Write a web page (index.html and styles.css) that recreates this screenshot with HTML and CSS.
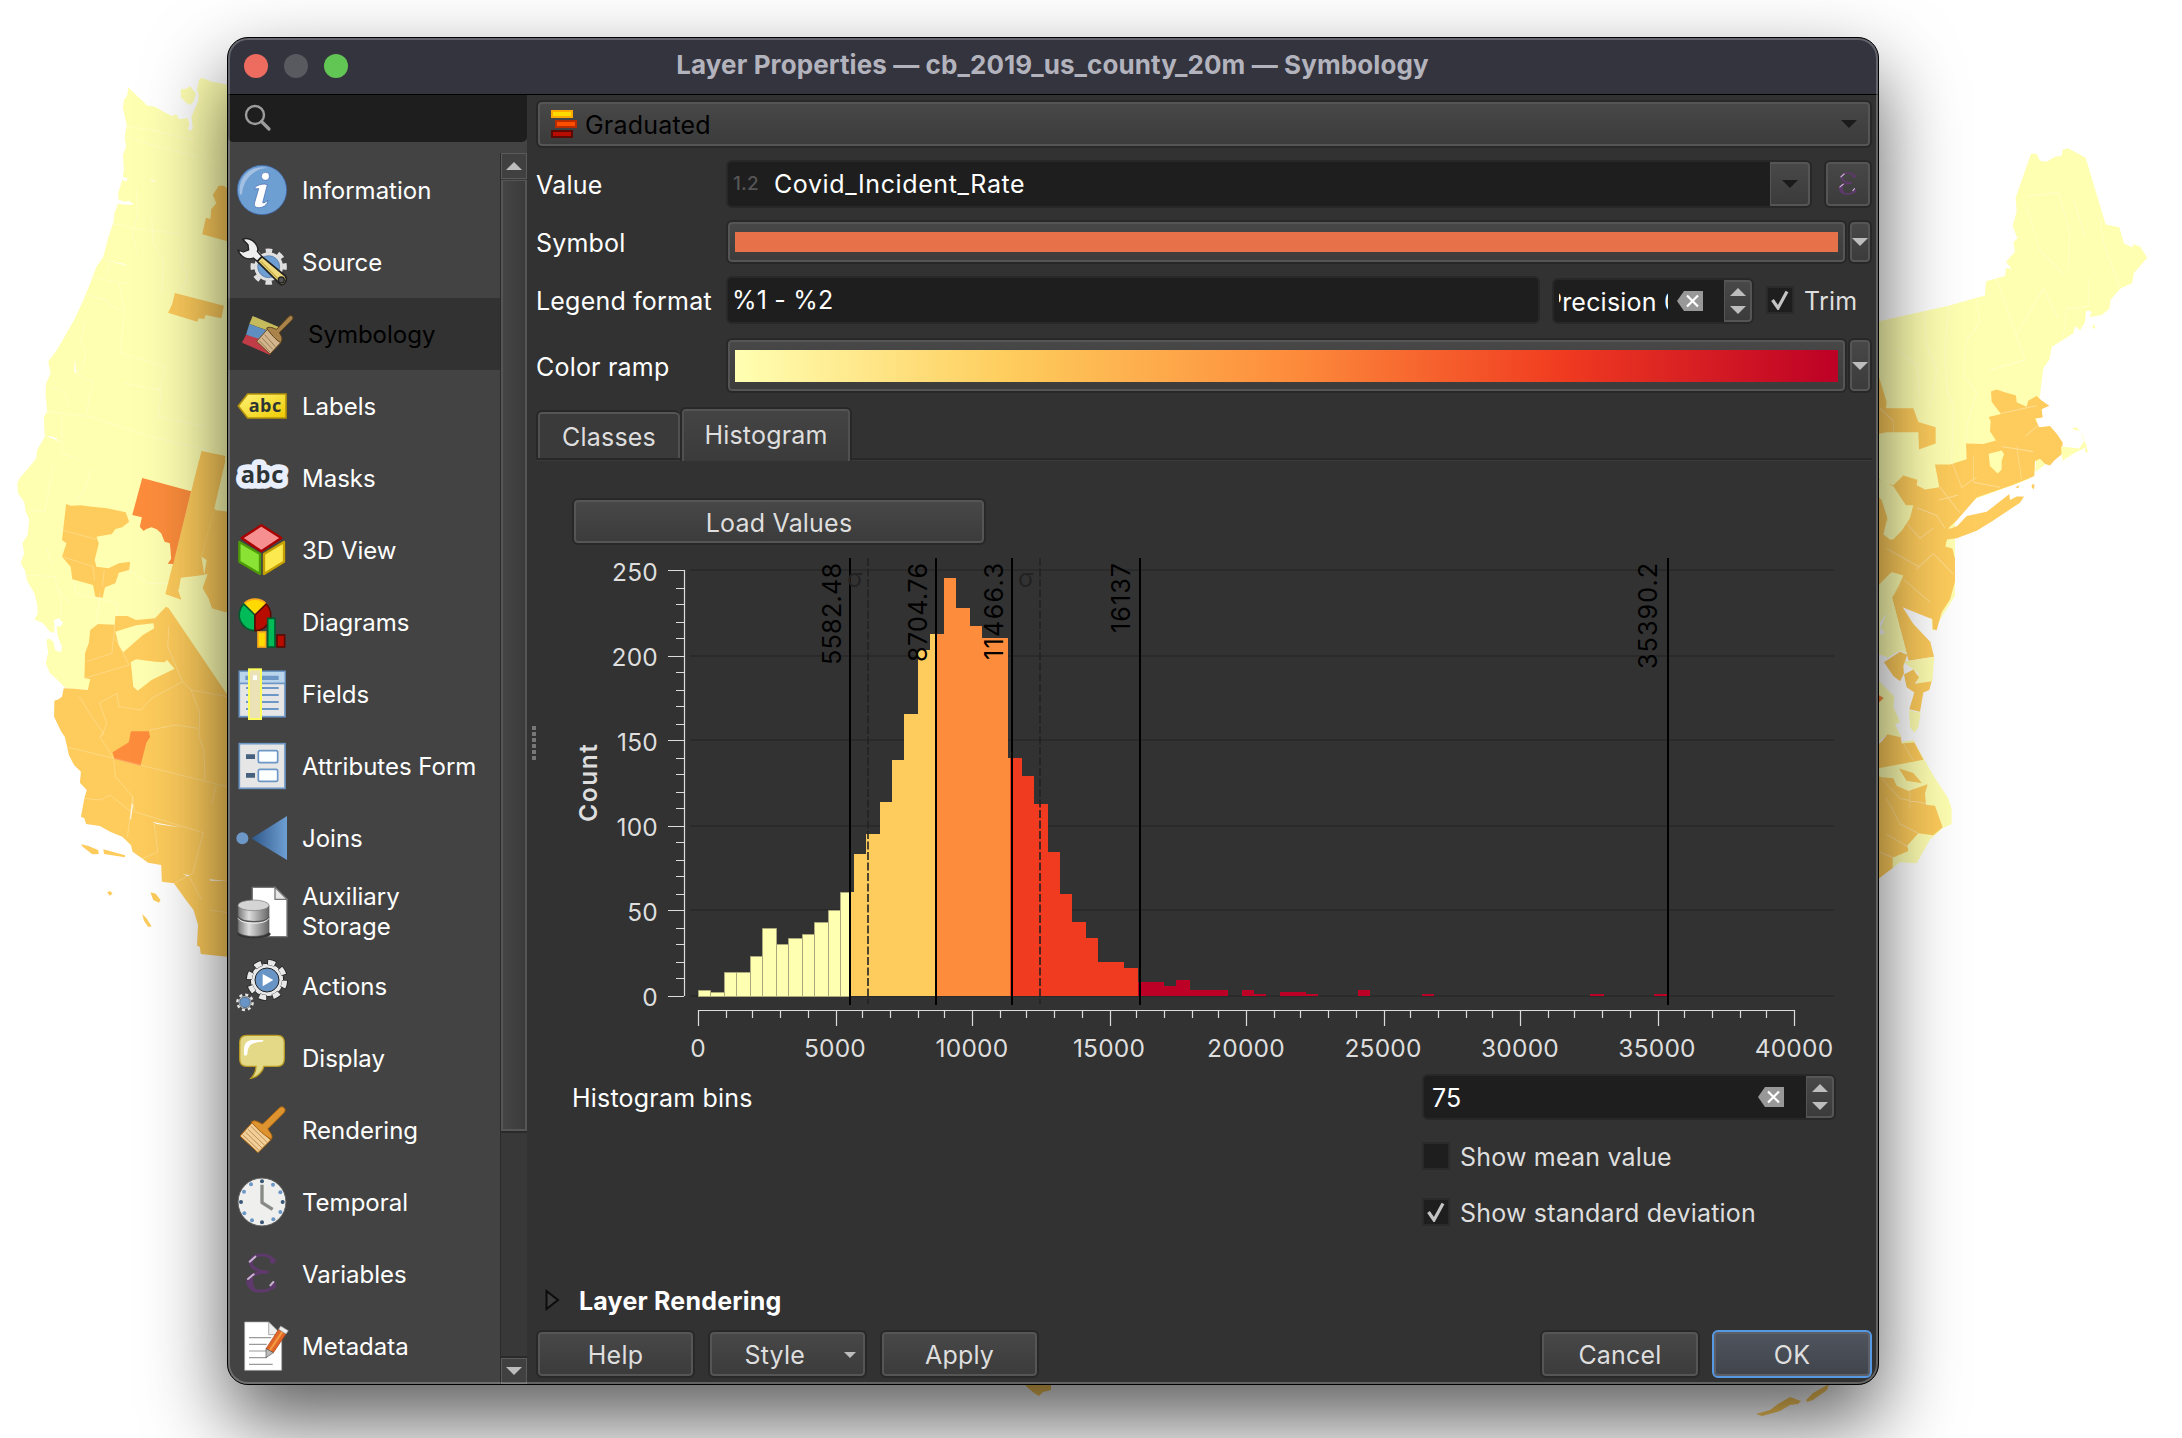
FILE: index.html
```html
<!DOCTYPE html>
<html lang="en">
<head>
<meta charset="utf-8">
<title>Layer Properties — cb_2019_us_county_20m — Symbology</title>
<link rel="stylesheet" href="styles.css">
</head>
<body>
<div class="desktop">
<svg class="map" width="2182" height="1438" viewBox="0 0 2182 1438">
  <!-- Pacific north-west -->
  <g transform="scale(.34439 .33333)">
    <path class="c1" d="M372 262L395 285 420 308 425 316 450 320 475 335 500 348 512 343 520 358 545 355 550 372 546 388 553 393 560 385 556 350 562 335 575 305 577 285 572 270 578 240 585 233 615 245 700 262V1442H55L105 1375 108 1350 130 1310 127 1250 137 1235 132 1180 134 1150 147 1120 140 1085 165 1050 185 1015 215 960 240 905 262 850 280 800 300 770 315 710 330 665 332 640 345 605 343 580 355 540 360 510 357 465 366 440 362 410 368 375 357 325 360 300 370 285Z"/>
    <path class="c1" d="M525 268L540 266 552 259 562 272 569 280 562 305 552 315 540 308 525 292Z"/>
    <path class="c2" d="M587 703L598 653 611 657 613 628 628 610 618 585 635 557 650 557 700 600V735Z"/>
    <path class="c2" d="M488 938L500 912 508 879 650 917 643 955 597 945 593 957 577 955 573 965Z"/>
    <path class="c2" d="M585 1353L655 1368 640 1445 565 1442Z"/>
    <path class="sea" d="M356 530L370 535 368 544 355 541ZM438 540L455 542 440 545ZM340 598L365 606 372 602 390 613 372 614 345 612ZM296 778L372 795 350 789 375 799ZM133 1307L155 1310 175 1325ZM217 1075L222 1120 216 1115Z"/>
    <path class="ln" d="M365 378L450 392 560 420M362 408L455 440 580 470M395 560L400 640 385 700 398 760M330 672L420 690 520 700M320 790L308 830M270 830L350 850 375 850M255 885L310 900 325 920 350 930M248 965L235 1020 250 1060 240 1100 220 1120 270 1145 250 1245M350 1060L480 1100 460 1180M345 850L360 930 350 1060M440 650L445 730 475 780 470 880M525 750L530 800 545 830 525 870M150 1160L190 1180 200 1220M135 1235L260 1250 440 1310 600 1350M180 1245V1360L290 1400M360 1150L470 1170 460 1250 600 1280"/>
  </g>
  <!-- California and Nevada -->
  <g transform="translate(0 460) scale(.34439 .33333)">
    <path class="c1" d="M105 0L60 50 50 70 52 100 70 125 75 155 85 180 80 225 65 250 70 280 60 310 72 330 80 365 100 400 108 435 110 460 100 478 125 490 145 515 160 520 155 535 135 538 137 560 140 575 133 610 145 640 165 658 190 685 260 690 700 800V0Z"/>
    <path class="sea" d="M157 480L170 475 183 488 178 497 164 500 168 530 180 560 176 577 160 570 155 545 142 535 142 518 158 518Z"/>
    <path class="c2" d="M578 0H660V135L622 150 585 290 593 345 525 353 520 385 528 405 527 420 480 403 502 312 555 95Z"/>
    <path class="c2" d="M622 150L700 160V465L617 450 605 415 588 385 593 345 600 300 585 290Z"/>
    <path class="c1" d="M655 0H700V160L622 146Z"/>
    <path class="c1" d="M527 355L560 352 603 342 588 385 605 415 615 445 700 470V770L485 440 480 403 527 420 517 390 525 380Z"/>
    <path class="c3" d="M413 54L555 94 503 312 487 311 497 296 495 268 493 250 478 245 468 220 455 208 440 202 425 207 417 213 406 200 412 172 384 165Z"/>
    <path class="c2" d="M192 132L205 137 235 136 255 139 310 145 365 157 375 185 355 202 335 207 325 222 280 230 287 250 275 300 280 320 315 325 345 310 378 305 375 330 345 338 335 370 305 382 298 413 277 410 270 375 210 358 205 320 180 290 193 250 180 240Z"/>
    <path class="c2" d="M185 685L215 686 255 690 262 658 245 655 247 580 258 548 262 510 285 492 333 494 335 468 370 468 395 480 450 475 482 440 490 445 700 765V1495L583 1482 580 1460 572 1457 575 1395 562 1350 540 1320 505 1270 470 1265 468 1215 430 1208 412 1195 385 1175 380 1155 355 1130 320 1115 290 1098 250 1092 245 1075 235 1070 245 1015 252 990 232 968 235 935 215 915 200 885 195 860 188 830 178 815 157 770 158 722 170 718 180 710Z"/>
    <path class="c1" d="M335 515L395 496 445 490 448 505 415 525 358 577 345 555ZM380 606L395 598 450 605 478 607 485 600 507 626 440 660 400 692 387 680Z"/>
    <path class="c3" d="M327 877L374 847 380 814 432 814 436 830 425 848 408 917 332 897Z"/>
    <path class="c2" d="M235 1153L255 1157 285 1170 287 1182 268 1183 240 1160ZM300 1168L363 1186V1192L302 1182ZM311 1297L320 1293 327 1301 319 1307ZM437 1297L452 1301 466 1320 462 1328 445 1320ZM413 1362L425 1375 440 1399 431 1401 418 1382Z"/>
    <path class="sea" d="M383 1030L386 1035 380 1080 378 1075ZM441 1085L530 1103 455 1092ZM530 1243L550 1245 545 1249ZM607 1258L660 1262 612 1262ZM565 1325L588 1328Z"/>
    <path class="ln" d="M155 15L130 155 85 150M265 30L240 100 220 120M75 345L160 350 165 380 200 430M135 265L150 310M215 360L220 400 340 430V465M180 210L280 238M182 290L270 320 275 360M303 330L297 380M170 390L180 440 175 490M290 400L280 490M333 495L325 580 250 605M335 535L358 580 375 615 245 655M287 730L340 700 345 740 410 750 440 715 530 665 487 560 490 500M230 710L260 760 300 820 290 830 330 895M290 730L310 790 295 830M530 665L555 690 660 710M555 690L580 760 578 830 592 870 595 960M435 810L510 795 575 805M198 862L330 895 660 980M330 900L335 950 385 1010 390 1055 590 1118M385 1010L370 1130M448 1090L458 1175 415 1195M590 1118L560 1240 505 1270M245 1015L290 1020 320 1005 380 1055M628 975L615 1030M550 1250L585 1320M610 1350L660 1358M375 330L430 370 490 370"/>
  </g>
  <!-- North-east coast -->
  <g transform="translate(1700 120) scale(.33333 .51020)">
    <path class="c1" d="M500 400L600 385 745 364 855 344 858 316 880 312 915 306 918 290 935 292 918 278 945 258 940 240 952 232 938 208 950 180 947 152 993 66 1010 66 1020 80 1040 82 1065 72 1085 70 1088 58 1105 56 1135 66 1157 74 1217 205 1258 210 1272 242 1298 250 1300 243 1320 248 1342 270 1302 300 1296 320 1262 330 1232 352 1228 370 1205 382 1170 386 1158 374 1155 396 1140 412 1125 404 1120 418 1055 445 1048 470 1030 486 1020 540 990 700 700 1000 500 1000Z"/>
    <path class="c1" d="M1178 402L1186 403 1184 409 1177 408Z"/>
    <path class="sea" d="M1162 373L1175 376 1168 387 1160 382ZM1018 542L1100 530V900L765 1000V780L830 742 1003 700 1030 650Z"/>
    <path class="c2" d="M873 532L890 528 912 533 948 540 950 553 980 562 985 550 1010 541 1025 550 1048 560 1025 567 1028 583 1005 585 1018 602 1050 600 1070 615 1088 632 1085 655 1062 668 1050 677 1005 668 1003 698 940 715 830 740 770 785 745 800 735 840 500 960V705L580 716 610 697 652 705 650 716 675 724 718 720 705 675 750 675 800 665 798 634 850 635 888 628 870 610 872 590 866 582 903 576 875 552Z"/>
    <path class="c2" d="M530 490L560 552 558 565 640 565 655 592 707 602V634L657 646 655 612 560 612 500 620ZM500 680L543 707 500 735Z"/>
    <path class="c1" d="M866 654L905 648 912 655 905 668 905 685 893 693 870 678ZM1008 668L1020 664 1037 675 1005 690ZM1083 640L1138 644 1153 628 1140 610 1115 605 1130 602 1150 620 1165 652 1155 650 1157 642 1125 652 1087 668ZM618 755L640 755 630 780 605 805 575 825 550 812 562 780 545 745 530 735 520 700 580 718Z"/>
    <path class="c1" d="M618 842L640 820 668 828 668 850 655 860 630 850Z"/>
    <path class="c2" d="M540 745L563 785 540 782ZM742 803L772 796 800 776 860 768 928 733 930 745 950 738 972 738 960 750 880 785 830 805 770 820 740 822ZM946 720L958 716 955 722ZM996 714L1004 715 1001 724 995 720Z"/>
    <path class="c2" d="M500 830L600 820 750 800 735 836 757 840 765 860V905L750 940 725 965 710 1000 698 998 697 978 680 976 615 960 690 1020 702 1052 626 1060 576 936 610 905 500 1000Z"/>
    <path class="c1" d="M500 940L545 905 575 886 610 893 597 912 576 936 620 1045 600 1040 560 1055 500 1180Z"/>
    <path class="sea" d="M608 955L695 978 697 1000 705 1020 690 1022 640 988ZM540 985L560 968 542 995 555 1005 540 1010Z"/>
    <path class="sea" d="M500 1040L560 1052 600 1090 640 1150 630 1225 560 1205 540 1130Z"/>
    <path class="c1" d="M538 1100L560 1115 583 1130 580 1150 600 1180 585 1185 605 1210 560 1205 500 1240V1075ZM610 1062L703 1052 697 1100 650 1105 655 1085Z"/>
    <path class="c2" d="M552 1063L600 1042 622 1048 610 1070 612 1085 600 1100 580 1090ZM612 1087L640 1077 657 1092 645 1105 695 1100 688 1117 670 1122 660 1160 628 1155 643 1122 620 1112Z"/>
    <path class="c3" d="M536 1127L551 1133 536 1142Z"/>
    <path class="c1" d="M627 1157L662 1162 655 1190 643 1201 630 1190Z"/>
    <path class="c1" d="M500 1230L640 1215 700 1285 745 1330 755 1350V1380L728 1388 690 1410 650 1457 600 1455 570 1470 500 1500Z"/>
    <path class="c2" d="M500 1240L545 1218 562 1204 603 1210 605 1222 643 1220 670 1254 500 1275ZM500 1280L545 1288 580 1290 590 1305 625 1315 683 1302 675 1320 678 1342 705 1344 728 1386 700 1402 655 1398 622 1422 625 1433 578 1446V1466L500 1505ZM597 1271L640 1280 666 1300 620 1295Z"/>
    <path class="ln" d="M975 157L1018 254 1090 302M985 150L1075 142 1110 220 1105 300M1120 155L1155 228M1200 190L1210 240 1260 330M890 312L975 470 870 490M950 420L1030 330 1075 390M1165 310V365L1100 370 1090 425M670 375L680 440 710 490 690 560M745 364L735 450 740 530 760 560 755 670M830 350L838 400 800 430 790 500 830 535 800 600 798 634M590 450L650 480 660 540M905 575L1010 560M820 660V710L900 720M950 640L965 705M755 670L785 720 830 700M718 745L775 735M720 720L780 770M905 640L1000 650M560 840L655 875M650 880L700 850 760 890M650 760L710 775 735 800M610 900L690 945M620 790L660 820 700 800M975 620L1030 590M540 565L580 590V612M545 1290L600 1330 680 1340M560 1330L600 1380 655 1398M630 1310V1350M600 1210L640 1255M560 1400L625 1425M540 1435L580 1446"/>
  </g>
  <!-- Gulf coast fragments -->
  <path class="c2" d="M1021 1380H1051V1390L1043 1392 1039 1396 1034 1393 1028 1388ZM1756 1414L1770 1410 1778 1404 1790 1397 1801 1401 1798 1404 1790 1405 1780 1411 1762 1416ZM1806 1400L1813 1393 1829 1384 1827 1390 1813 1400 1807 1402Z" />
</svg>

<main class="window">
  <header class="titlebar">
    <div class="lights"><i class="light close"></i><i class="light min"></i><i class="light max"></i></div>
    <h1 class="title">Layer Properties — cb_2019_us_county_20m — Symbology</h1>
  </header>
  <div class="body">
    <aside class="sidebar">
      <div class="search"><svg width="30" height="30" viewBox="0 0 30 30"><circle cx="12" cy="12" r="9" fill="none" stroke="#9c9c9c" stroke-width="2.4"/><path d="M18.500 18.500L26 26" stroke="#9c9c9c" stroke-width="3.200" stroke-linecap="round"/></svg></div>
      <div class="listwrap">
      <nav class="list">
        <div class="item"><svg class="ico" viewBox="0 0 156 156"><circle cx="78" cy="78" r="74" fill="#6e9fd3" stroke="#3c65ad" stroke-width="2"/><path d="M12 92A68 68 0 0 1 96 12C60 12 22 40 18 90Z" fill="#a3c0e2"/><circle cx="88" cy="37" r="12" fill="#fff" stroke="#3c65ad" stroke-width="2"/><path d="M62 66C72 61 84 58 94 62L80 116C84 118 90 114 96 108C94 124 80 132 66 131C54 130 54 122 57 112L68 74C64 73 60 74 57 76C57 72 58 68 62 66Z" fill="#fff" stroke="#3c65ad" stroke-width="2"/></svg><span>Information</span></div>
        <div class="item"><svg class="ico" viewBox="0 0 156 156"><circle cx="98" cy="92" r="43" fill="#e0e0e0"/><circle cx="98" cy="92" r="48" fill="none" stroke="#e0e0e0" stroke-width="13" stroke-dasharray="19 18.700" transform="rotate(-12 98 92)"/><circle cx="98" cy="92" r="33" fill="#6e9fd3" stroke="#4b6e99" stroke-width="2"/><path d="M20 10C38 2 62 16 66 40L64 46 78 62 64 76 52 66C34 74 12 62 6 42L22 48 38 42 36 26Z" fill="#eee" stroke="#222" stroke-width="4" stroke-linejoin="round"/><path d="M64 76L78 62 148 120C156 132 146 148 134 146Z" fill="#eeda7c" stroke="#222" stroke-width="5" stroke-linejoin="round"/><path d="M74 76L132 134" stroke="#c9ae4f" stroke-width="4"/><circle cx="136" cy="132" r="9" fill="#555" stroke="#222" stroke-width="4"/></svg><span>Source</span></div>
        <div class="item active"><svg class="ico" viewBox="0 0 156 156"><path d="M32 24L112 58 102 76 22 48Z" fill="#c6bb5c"/><path d="M22 48L98 76 88 112 12 80Z" fill="#5f8fc0"/><path d="M12 80L92 106 84 141 0 104Z" fill="#c03c46"/><path d="M44 100L78 62 116 104 84 138Z" fill="#d2b58c" stroke="#6b4b20" stroke-width="3"/><path d="M52 98L84 132M60 90L92 124M68 80L100 116" stroke="#8d6f48" stroke-width="2.500"/><path d="M74 60C84 54 96 62 104 64L140 26C148 18 158 28 150 36L112 74C118 84 124 92 116 104C102 96 84 76 74 60Z" fill="#a9834a" stroke="#5e431b" stroke-width="3"/></svg><span>Symbology</span></div>
        <div class="item"><svg class="ico" viewBox="0 0 156 156"><defs><linearGradient id="tag" x1="0" y1="0" x2="1" y2="1"><stop offset="0" stop-color="#fff37a"/><stop offset="1" stop-color="#eecb00"/></linearGradient></defs><path d="M7 78L35 42H150V114H35Z" fill="url(#tag)" stroke="#b5950c" stroke-width="5"/><text x="87" y="95" class="abc" font-size="54" textLength="98">abc</text></svg><span>Labels</span></div>
        <div class="item"><svg class="ico" viewBox="0 0 156 156"><text x="78" y="94" class="abc halo" font-size="71" textLength="128">abc</text><text x="78" y="94" class="abc" font-size="71" textLength="128">abc</text></svg><span>Masks</span></div>
        <div class="item"><svg class="ico" viewBox="0 0 156 156" stroke-width="7" stroke-linejoin="round"><path d="M76 4L136 42 76 82 17 42Z" fill="#f68f8f" stroke="#a90000"/><path d="M10 54L72 90V150L10 113Z" fill="#8ae234" stroke="#4e9a06"/><path d="M144 54L84 90V150L144 113Z" fill="#fce94f" stroke="#c4a000"/></svg><span>3D View</span></div>
        <div class="item"><svg class="ico" viewBox="0 0 156 156" stroke-width="5"><path d="M57 57L23 24A47 47 0 0 1 91 24Z" fill="#ffda00" stroke="#fba91c"/><path d="M57 57V104A47 47 0 0 1 23 24Z" fill="#00bb57" stroke="#005a2e"/><path d="M57 57L91 24A47 47 0 0 1 57 104Z" fill="#b80c00" stroke="#5c0b04"/><rect x="66" y="108" width="23" height="45" fill="#ffda00" stroke="#fba91c"/><rect x="95" y="67" width="22" height="86" fill="#00bb57" stroke="#005a2e"/><rect x="123" y="117" width="23" height="36" fill="#b80c00" stroke="#5c0b04"/></svg><span>Diagrams</span></div>
        <div class="item"><svg class="ico" viewBox="0 0 156 156"><rect x="10" y="10" width="137" height="136" fill="#e6e6e6" stroke="#6d97c7" stroke-width="5"/><path d="M12 12H145V44H12Z" fill="#b9d5ec"/><path d="M10 46H147" stroke="#6d97c7" stroke-width="5"/><path d="M28 23H128V36H28Z" fill="#6d97c7"/><path d="M30 60H128M30 81H128M30 102H128M30 123H128" stroke="#6d97c7" stroke-width="6"/><rect x="39" y="4" width="36" height="149" fill="#ebe2b5" stroke="#fdfd5c" stroke-width="6"/><path d="M51 22H63V36H51Z" fill="#fff"/></svg><span>Fields</span></div>
        <div class="item"><svg class="ico" viewBox="0 0 156 156"><rect x="10" y="11" width="137" height="134" fill="#e6e6e6" stroke="#6d97c7" stroke-width="5"/><rect x="67" y="32" width="58" height="36" rx="5" fill="#fcffff" stroke="#6d97c7" stroke-width="5"/><rect x="67" y="88" width="58" height="36" rx="5" fill="#fcffff" stroke="#6d97c7" stroke-width="5"/><path d="M30 43H57V57H30ZM30 99H57V113H30Z" fill="#46617d"/></svg><span>Attributes Form</span></div>
        <div class="item"><svg class="ico" viewBox="0 0 156 156"><defs><linearGradient id="jn"><stop offset="0" stop-color="#2f5789"/><stop offset="1" stop-color="#6e9fd3"/></linearGradient></defs><circle cx="19" cy="79" r="18" fill="#6d97c7"/><path d="M46 79L153 12V144Z" fill="url(#jn)"/></svg><span>Joins</span></div>
        <div class="item tall"><svg class="ico" viewBox="0 0 156 156"><defs><linearGradient id="cy"><stop offset="0" stop-color="#777"/><stop offset=".35" stop-color="#ddd"/><stop offset="1" stop-color="#666"/></linearGradient></defs><path d="M49 4H117L153 40V152H49Z" fill="#fff" stroke="#777" stroke-width="4"/><path d="M117 4V40H153Z" fill="#e6e6e6" stroke="#777" stroke-width="4"/><ellipse cx="54" cy="144" rx="50" ry="13" fill="#333"/><path d="M6 58V136C10 156 95 156 99 136V58Z" fill="url(#cy)" stroke="#555" stroke-width="2"/><ellipse cx="52.500" cy="58" rx="46.500" ry="16" fill="#d4d4d4" stroke="#777" stroke-width="2"/><path d="M6 92C16 112 90 112 99 92" fill="none" stroke="#555" stroke-width="4"/><path d="M6 97C16 117 90 117 99 97" fill="none" stroke="#eee" stroke-width="3"/></svg><span>Auxiliary<br>Storage</span></div>
        <div class="item"><svg class="ico" viewBox="0 0 156 156"><circle cx="93" cy="60" r="50" fill="#e8e8e8" stroke="#222" stroke-width="3"/><circle cx="93" cy="60" r="54" fill="none" stroke="#222" stroke-width="18" stroke-dasharray="25 17.400"/><circle cx="93" cy="60" r="53" fill="none" stroke="#e8e8e8" stroke-width="15" stroke-dasharray="21 20.600" transform="rotate(2 93 60)"/><circle cx="93" cy="60" r="36" fill="#6894c6" stroke="#222" stroke-width="3"/><path d="M80 42L112 60 80 79Z" fill="#fff"/><circle cx="27" cy="127" r="20" fill="#e8e8e8" stroke="#222" stroke-width="2"/><circle cx="27" cy="127" r="23" fill="none" stroke="#e8e8e8" stroke-width="7" stroke-dasharray="9 9.060"/><circle cx="27" cy="127" r="16" fill="#6894c6" stroke="#345" stroke-width="2"/></svg><span>Actions</span></div>
        <div class="item"><svg class="ico" viewBox="0 0 156 156"><path d="M32 10H124C138 10 145 18 145 32V80C145 96 138 103 124 103H84C80 120 64 136 45 139C56 128 60 116 60 103H32C18 103 11 96 11 80V32C11 18 18 10 32 10Z" fill="#e4d987" stroke="#b69a24" stroke-width="4"/><path d="M24 68C22 36 30 24 50 24H78C84 24 84 28 78 29C44 32 36 40 34 66C33 72 25 72 24 68Z" fill="#fff"/></svg><span>Display</span></div>
        <div class="item"><svg class="ico" viewBox="0 0 156 156"><path d="M12 96L50 54 104 108 66 146Z" fill="#f0cf9a" stroke="#a8620c" stroke-width="3"/><path d="M20 92L70 140M28 84L78 132M36 76L86 124M44 66L94 116" stroke="#b8813c" stroke-width="2.500"/><path d="M46 54C58 44 70 58 80 60L130 12C140 2 154 16 144 26L96 74C98 84 114 92 106 106Q76 90 46 54Z" fill="#dd932f" stroke="#a8620c" stroke-width="3"/></svg><span>Rendering</span></div>
        <div class="item"><svg class="ico" viewBox="0 0 156 156"><circle cx="78" cy="78" r="72" fill="#efefed" stroke="#5c5c5c" stroke-width="3"/><g fill="#6d97c7"><circle cx="45" cy="25" r="6"/><circle cx="111" cy="26" r="6"/><circle cx="24" cy="47" r="6"/><circle cx="133" cy="49" r="6"/><circle cx="25" cy="112" r="6"/><circle cx="133" cy="108" r="6"/><circle cx="48" cy="133" r="6"/><circle cx="112" cy="130" r="6"/></g><g fill="#3b5675"><circle cx="78" cy="16" r="6"/><circle cx="15" cy="78" r="6"/><circle cx="140" cy="78" r="6"/><circle cx="78" cy="139" r="6"/></g><path d="M78 26V80L110 100" fill="none" stroke="#888a85" stroke-width="10" stroke-linejoin="round"/></svg><span>Temporal</span></div>
        <div class="item"><svg class="ico" viewBox="0 0 156 156"><use href="#eps"/></svg><span>Variables</span></div>
        <div class="item"><svg class="ico" viewBox="0 0 156 156"><path d="M26 6H98L137 44V151H26Z" fill="#fff" stroke="#aaa" stroke-width="2"/><path d="M98 6V44H137Z" fill="#eee" stroke="#888" stroke-width="2"/><path d="M39 53H106M39 73H92M39 93H90M39 113H92M39 133H110" stroke="#9a9a9a" stroke-width="3.500"/><path d="M128 28L150 42 112 98 90 86Z" fill="#e2662a" stroke="#a53f0a" stroke-width="2"/><path d="M139 35L101 92" stroke="#f49b3f" stroke-width="6"/><path d="M90 86L112 98 90 113Z" fill="#bbb" stroke="#555" stroke-width="2"/><path d="M134 18L157 32 150 42 128 28Z" fill="#eee" stroke="#999" stroke-width="2"/></svg><span>Metadata</span></div>
      </nav>
      <div class="scroll">
        <div class="sbtn"><svg width="16" height="8"><path d="M0 8L8 0 16 8Z" fill="#bdbdbd"/></svg></div>
        <div class="thumb"></div><div class="track"></div>
        <div class="sbtn"><svg width="16" height="8"><path d="M0 0L8 8 16 0Z" fill="#bdbdbd"/></svg></div>
      </div>
      </div>
    </aside>
    <div class="grip"><i></i><i></i><i></i><i></i><i></i><i></i></div>
    <section class="main">
      <div class="btn combo">
        <svg width="26" height="28" viewBox="0 0 26 28" stroke-width="2"><path d="M1 1H21V7H1Z" fill="#ffda00" stroke="#ffaa00"/><path d="M5 11H25V17H5Z" fill="#ff4e00" stroke="#b92b00"/><path d="M1 21H21V27H1Z" fill="#b80c00" stroke="#5c0b04"/></svg>
        <span>Graduated</span>
        <svg class="push" width="16" height="8"><path d="M0 0L8 8 16 0Z" fill="#1b1b1b"/></svg>
      </div>
      <div class="row value">
        <label class="lab">Value</label>
        <div class="field grow"><span class="hint">1.2</span><span class="cv">Covid_Incident_Rate</span><div class="cell wide"><svg width="16" height="8"><path d="M0 0L8 8 16 0Z" fill="#1b1b1b"/></svg></div></div>
        <div class="btn exprbtn"><svg width="30" height="30" viewBox="0 0 156 156"><g id="eps"><path d="M112 38C102 18 60 14 46 34C36 52 56 70 98 73C44 72 26 96 40 114C56 136 104 134 116 110" fill="none" stroke="#5e3a6c" stroke-width="9" stroke-linecap="round"/><path d="M56 22C36 34 36 56 56 66L50 48ZM50 76C24 88 26 124 62 134L52 108Z" fill="#5e3a6c"/><circle cx="110" cy="38" r="9" fill="#5e3a6c"/><circle cx="111" cy="114" r="9" fill="#5e3a6c"/><path d="M41 41L58 26M36 93L53 79M103 112L112 102" stroke="#c9b3d1" stroke-width="6" stroke-linecap="round"/></g></svg></div>
      </div>
      <div class="row symbol">
        <label class="lab">Symbol</label>
        <div class="btn swatch grow"><div class="fill"></div></div>
        <div class="btn drop"><svg width="16" height="8"><path d="M0 0L8 8 16 0Z" fill="#bdbdbd"/></svg></div>
      </div>
      <div class="row legend">
        <label class="lab">Legend format</label>
        <div class="field fmt"><span>%1 - %2</span></div>
        <div class="field prec"><span class="clip"><span>Precision 0</span></span><svg width="26" height="20"><path d="M0 10L7 0H26V20H7Z" fill="#989898"/><path d="M10 4.500L21 15.500M21 4.500L10 15.500" stroke="#fff" stroke-width="2.200"/></svg><div class="cell spin"><svg width="16" height="26"><path d="M0 8L8 0 16 8ZM0 18L8 26 16 18Z" fill="#bdbdbd"/></svg></div></div>
        <div class="check"><svg width="18" height="20"><path d="M1.500 10L7 18 16 1.500" fill="none" stroke="#c4c4c4" stroke-width="3.200"/></svg></div>
        <span class="trim">Trim</span>
      </div>
      <div class="row ramp">
        <label class="lab">Color ramp</label>
        <div class="btn swatch grow"><div class="fill grad"></div></div>
        <div class="btn drop"><svg width="16" height="8"><path d="M0 0L8 8 16 0Z" fill="#bdbdbd"/></svg></div>
      </div>
      <div class="tabs"><div class="tab t1">Classes</div><div class="tab t2">Histogram</div></div>
      <div class="page">
        <div class="btn load"><span>Load Values</span></div>
        <svg class="chart" width="1264" height="529" viewBox="572 545 1264 529">
          <path d="M690 570H1834M690 656H1834M690 740H1834M690 826H1834M690 910H1834M690 996H1834" stroke="#2a2a2a" stroke-width="2"/>
          <g fill="#ffffb2" stroke="#a9a97c" stroke-width="1"><path d="M698.500 996.500V990.500H710.500V996.500ZM710.500 996.500V992.500H724.500V996.500ZM724.500 996.500V972.500H736.500V996.500ZM736.500 996.500V972.500H750.500V996.500ZM750.500 996.500V956.500H762.500V996.500ZM762.500 996.500V928.500H776.500V996.500ZM776.500 996.500V944.500H788.500V996.500ZM788.500 996.500V938.500H802.500V996.500ZM802.500 996.500V934.500H814.500V996.500ZM814.500 996.500V922.500H828.500V996.500ZM828.500 996.500V910.500H840.500V996.500ZM840.500 996.500V892.500H850V996.500Z"/></g>
          <path fill="#fecc5c" d="M850 996V892H854V854H866V834H880V802H892V760H904V714H918V650H930V634H936V996Z"/>
          <path fill="#fd8d3c" d="M936 996V634H944V578H956V608H970V626H982V638H1008V758H1012V996Z"/>
          <path fill="#f03b20" d="M1010 996V758H1022V776H1034V804H1048V852H1060V894H1072V922H1086V938H1098V962H1124V968H1138V996Z"/>
          <path fill="#bd0026" d="M1138 996V982H1164V986H1176V980H1190V990H1228V996ZM1242 996V990H1254V994H1266V996ZM1280 996V992H1306V994H1318V996ZM1358 996V990H1370V996ZM1422 996V994H1434V996ZM1590 996V994H1604V996ZM1654 996V994H1668V996Z"/>
          <path d="M868 558V1004M1040 558V1004" stroke="#222" stroke-opacity=".8" stroke-width="2" stroke-dasharray="8 2.500"/>
          <path d="M850 558V1005M936 558V1005M1012 558V1005M1140 558V1005M1668 558V1005" stroke="#000" stroke-width="2"/>
          <g class="sig"><text x="855" y="587">σ</text><text x="1026" y="587">σ</text></g>
          <g class="brk">
            <text transform="translate(841 665) rotate(-90)" textLength="102">5582.48</text>
            <text transform="translate(927 662) rotate(-90)" textLength="99">8704.76</text>
            <text transform="translate(1003 660) rotate(-90)" textLength="97">11466.3</text>
            <text transform="translate(1130 633) rotate(-90)" textLength="70">16137</text>
            <text transform="translate(1657 669) rotate(-90)" textLength="106">35390.2</text>
          </g>
          <path fill="none" stroke="#dcdcdc" stroke-width="1.200" d="M684.500 570V996M668 570.500H684M668 656.500H684M668 740.500H684M668 826.500H684M668 910.500H684M668 996.500H684M676 588.500H684M676 604.500H684M676 622.500H684M676 638.500H684M676 672.500H684M676 690.500H684M676 706.500H684M676 724.500H684M676 758.500H684M676 774.500H684M676 792.500H684M676 808.500H684M676 842.500H684M676 860.500H684M676 876.500H684M676 894.500H684M676 928.500H684M676 944.500H684M676 962.500H684M676 978.500H684"/>
          <path fill="none" stroke="#dcdcdc" stroke-width="1.200" d="M698 1010.500H1795M698.500 1010V1026M836.500 1010V1026M972.500 1010V1026M1110.500 1010V1026M1246.500 1010V1026M1384.500 1010V1026M1520.500 1010V1026M1658.500 1010V1026M1794.500 1010V1026M726.500 1010V1018M752.500 1010V1018M780.500 1010V1018M808.500 1010V1018M862.500 1010V1018M890.500 1010V1018M918.500 1010V1018M944.500 1010V1018M1000.500 1010V1018M1026.500 1010V1018M1054.500 1010V1018M1082.500 1010V1018M1136.500 1010V1018M1164.500 1010V1018M1192.500 1010V1018M1218.500 1010V1018M1274.500 1010V1018M1300.500 1010V1018M1328.500 1010V1018M1356.500 1010V1018M1410.500 1010V1018M1438.500 1010V1018M1466.500 1010V1018M1492.500 1010V1018M1548.500 1010V1018M1574.500 1010V1018M1602.500 1010V1018M1630.500 1010V1018M1684.500 1010V1018M1712.500 1010V1018M1740.500 1010V1018M1766.500 1010V1018"/>
          <g class="ax end"><text x="658" y="581">250</text><text x="658" y="666">200</text><text x="658" y="751">150</text><text x="658" y="836">100</text><text x="658" y="921">50</text><text x="658" y="1006">0</text></g>
          <g class="ax mid"><text x="698" y="1057">0</text><text x="835" y="1057">5000</text><text x="972" y="1057">10000</text><text x="1109" y="1057">15000</text><text x="1246" y="1057">20000</text><text x="1383" y="1057">25000</text><text x="1520" y="1057">30000</text><text x="1657" y="1057">35000</text><text x="1794" y="1057">40000</text></g>
          <text class="cnt" transform="translate(597 822) rotate(-90)" textLength="78">Count</text>
        </svg>
        <div class="bins"><span class="hb">Histogram bins</span><div class="field binfield"><span>75</span><svg width="26" height="20"><path d="M0 10L7 0H26V20H7Z" fill="#989898"/><path d="M10 4.500L21 15.500M21 4.500L10 15.500" stroke="#fff" stroke-width="2.200"/></svg><div class="cell spin"><svg width="16" height="26"><path d="M0 8L8 0 16 8ZM0 18L8 26 16 18Z" fill="#bdbdbd"/></svg></div></div></div>
        <div class="opt o1"><div class="check"></div><span>Show mean value</span></div>
        <div class="opt o2"><div class="check"><svg width="18" height="20"><path d="M1.500 10L7 18 16 1.500" fill="none" stroke="#c4c4c4" stroke-width="3.200"/></svg></div><span>Show standard deviation</span></div>
      </div>
      <div class="group"><svg width="15" height="22"><path d="M1.500 2V20L13 11Z" fill="#3c3c3c" stroke="#0c0c0c" stroke-width="2"/></svg><b>Layer Rendering</b></div>
      <footer class="actions">
        <div class="btn"><span>Help</span></div>
        <div class="btn style"><span>Style</span><svg width="12" height="6"><path d="M0 0L6 6 12 0Z" fill="#bdbdbd"/></svg></div>
        <div class="btn"><span>Apply</span></div>
        <div class="btn cancel"><span>Cancel</span></div>
        <div class="btn ok"><span>OK</span></div>
      </footer>
    </section>
  </div>
</main>
</div>
</body>
</html>
```
FILE: styles.css
```css
* { box-sizing: border-box; }
body { margin: 0; background: #fff; }
svg { display: block; flex: none; }
.desktop {
  position: relative;
  width: 2182px;
  height: 1438px;
  overflow: hidden;
  background: #fff;
  font-family: Inter, "Liberation Sans", sans-serif;
  font-size: 25px;
  line-height: 30px;
  letter-spacing: .2px;
  color: #fff;
  white-space: nowrap;
}
.c1 { fill: #ffffb2; }
.c2 { fill: #fecc5c; }
.c3 { fill: #fd8d3c; }
.sea { fill: #fff; }
.ln { fill: none; stroke: #fff; stroke-opacity: .35; stroke-width: 2; }

/* Dialog window floating over the map canvas */
.window {
  position: absolute;
  left: 227px;
  top: 37px;
  width: 1652px;
  height: 1348px;
  border: 1px solid #000;
  border-radius: 21px;
  background: #323232;
  overflow: hidden;
  box-shadow: 0 36px 80px rgba(0,0,0,.64);
  display: flex;
  flex-direction: column;
}
.window::after {
  content: "";
  position: absolute;
  inset: 0;
  border-radius: 20px;
  box-shadow: inset 0 0 0 2px rgba(255,255,255,.24);
  pointer-events: none;
}
.titlebar {
  height: 57px;
  flex: none;
  display: flex;
  align-items: center;
  background: #34343f;
  border-bottom: 1px solid #000;
}
.lights { display: flex; gap: 16px; padding-left: 16px; width: 120px; }
.light { width: 24px; height: 24px; border-radius: 50%; }
.close { background: #ee6b60; }
.min { background: #595960; }
.max { background: #62c655; }
.title {
  flex: 1;
  margin: 0 121px 2px 0;
  font-size: 26px;
  font-weight: 700;
  letter-spacing: .1px;
  text-align: center;
  color: #b3b3bd;
}
.body { flex: 1; display: flex; min-height: 0; }

.sidebar { width: 299px; display: flex; flex-direction: column; background: #434343; }
.search {
  height: 47px;
  padding: 8px 0 0 15px;
  background: #1e1e1e;
  border-radius: 0 0 5px 5px;
}
.listwrap { display: flex; flex: 1; padding-top: 11px; min-height: 0; }
.list { flex: 1; padding-top: 1px; }
.item {
  height: 72px;
  display: flex;
  align-items: center;
  gap: 14px;
  padding-left: 8px;
  font-size: 24px;
  letter-spacing: 0;
}
.item span { padding-top: 2px; }
.item.tall { height: 76px; }
.item.tall span { padding-top: 0; }
.ico { width: 52px; height: 52px; overflow: visible; }
.item.active { background: #323232; color: #000; padding-left: 14px; }
.abc {
  font-family: "Open Sans", sans-serif;
  font-weight: 700;
  fill: #2e3436;
  text-anchor: middle;
}
.halo { stroke: #e8eefb; fill: #e8eefb; stroke-width: 34px; stroke-linejoin: round; }
.scroll {
  width: 27px;
  display: flex;
  flex-direction: column;
  background: #383838;
  border-left: 1px solid #2a2a2a;
}
.sbtn {
  height: 26px;
  display: flex;
  align-items: center;
  justify-content: center;
  border: 1px solid #5a5a5a;
  background: #404040;
}
.thumb {
  height: 951px;
  margin-top: 1px;
  border: 2px solid #555;
  border-top-width: 1px;
  background: linear-gradient(90deg, #454545, #3b3b3b);
  box-shadow: 0 2px 0 #2a2a2a;
}
.track { flex: 1; border-bottom: 2px solid #2a2a2a; }

.grip {
  width: 9px;
  padding: 631px 0 0 5px;
  display: flex;
  flex-direction: column;
  gap: 2px;
}
.grip i { width: 4px; height: 4px; background: #777; }

.main { flex: 1; padding: 5px 6px 0 0; display: flex; flex-direction: column; min-width: 0; }
.btn {
  display: flex;
  align-items: center;
  justify-content: center;
  border: 2px solid #282828;
  border-radius: 6px;
  background: linear-gradient(#484848, #3b3b3b);
  box-shadow: inset 0 0 0 2px #555;
  color: #dedede;
}
.btn span { padding-top: 2px; }
.row { display: flex; align-items: stretch; }
.lab { width: 190px; align-self: center; padding-top: 2px; }
.grow { flex: 1; }
.field {
  display: flex;
  align-items: center;
  background: #1e1e1e;
  border: 2px solid #282828;
  border-radius: 6px;
}
.cell {
  align-self: stretch;
  display: flex;
  align-items: center;
  justify-content: center;
  background: linear-gradient(#484848, #3b3b3b);
  border: 2px solid #555;
  border-left-width: 1px;
  border-radius: 0 4px 4px 0;
}
.combo { height: 48px; justify-content: flex-start; padding: 0 13px; color: #000; gap: 8px; }
.push { margin-left: auto; }
.value { height: 48px; margin-top: 12px; }
.hint { width: 46px; padding-left: 5px; font-size: 19px; font-weight: 500; color: #555; }
.cv { letter-spacing: .6px; }
.cell.wide { width: 40px; margin-left: auto; }
.exprbtn { width: 48px; margin-left: 12px; }
.symbol { height: 44px; margin-top: 12px; }
.swatch { padding: 0 7px; margin-right: 1px; }
.fill { flex: 1; height: 20px; background: #e77148; }
.drop { width: 24px; }
.legend { height: 48px; margin-top: 12px; align-items: center; }
.fmt { width: 814px; height: 48px; padding-left: 4px; }
.prec { width: 202px; height: 46px; margin: 2px 12px 0; padding-left: 5px; }
.clip { width: 109px; margin-right: 9px; overflow: hidden; display: flex; }
.clip span { margin-left: -13px; padding-top: 2px; }
.spin { width: 28px; margin-left: auto; }
.check {
  width: 28px;
  height: 28px;
  flex: none;
  display: flex;
  align-items: center;
  justify-content: center;
  background: #1e1e1e;
  border: 2px solid #2a2a2a;
}
.trim { margin-left: 10px; padding-top: 2px; color: #dedede; }
.ramp { height: 55px; margin-top: 14px; }
.grad {
  height: 32px;
  background: linear-gradient(90deg, #ffffb2, #fecc5c 25%, #fd8d3c 50%, #f03b20 75%, #bd0026);
}
.tabs {
  display: flex;
  align-items: flex-end;
  height: 54px;
  margin-top: 14px;
  background: linear-gradient(#282828 0 2px, #3a3a3a 2px) 0 51px / 100% 3px no-repeat;
}
.tab {
  display: flex;
  align-items: center;
  justify-content: center;
  color: #dedede;
  border: 2px solid #282828;
  border-bottom: 0;
  border-radius: 6px 6px 0 0;
  background: #3a3a3a;
  box-shadow: inset 0 2px #555, inset 2px 0 #505050, inset -2px 0 #505050;
}
.t1 { width: 144px; height: 48px; margin-bottom: 3px; padding-top: 4px; border-right: 0; }
.t2 { width: 172px; height: 54px; background: linear-gradient(#444, #3b3b3b); }
.page { padding: 37px 36px 0; }
.load { width: 414px; height: 47px; }
.chart { overflow: visible; }
.ax { fill: #dedede; font-size: 24.500px; }
.end { text-anchor: end; }
.mid { text-anchor: middle; }
.brk { fill: #000; font-size: 25px; letter-spacing: 0; }
.sig { fill: #222; font-size: 25px; text-anchor: middle; }
.cnt { fill: #dedede; font-size: 24.500px; font-weight: 600; letter-spacing: 0; }
.bins { display: flex; align-items: center; height: 46px; justify-content: space-between; }
.bins span { padding-top: 2px; }
.binfield { width: 414px; height: 46px; padding-left: 8px; }
.binfield > svg { margin-left: auto; }
.binfield .spin { margin-left: 22px; }
.opt { display: flex; align-items: center; gap: 10px; height: 28px; margin-left: 850px; color: #dedede; }
.opt span { padding-top: 2px; }
.o1 { margin-top: 22px; }
.o2 { margin-top: 28px; }
.group { display: flex; align-items: center; gap: 19px; height: 40px; margin-top: 54px; padding-left: 9px; }
.group b { font-weight: 700; padding-top: 1px; }
.actions { display: flex; height: 48px; margin-top: 10px; gap: 13px; }
.actions .btn { width: 159px; }
.actions .style { justify-content: flex-end; padding-right: 9px; }
.style svg { margin-top: 2px; }
.style span { margin-right: 39px; }
.actions .cancel { width: 160px; margin-left: auto; margin-right: -1px; }
.actions .ok {
  width: 160px;
  border-color: #5699e2;
  background: linear-gradient(#50545e, #40444b);
  box-shadow: inset 0 0 0 2px #5d6067;
}
```
